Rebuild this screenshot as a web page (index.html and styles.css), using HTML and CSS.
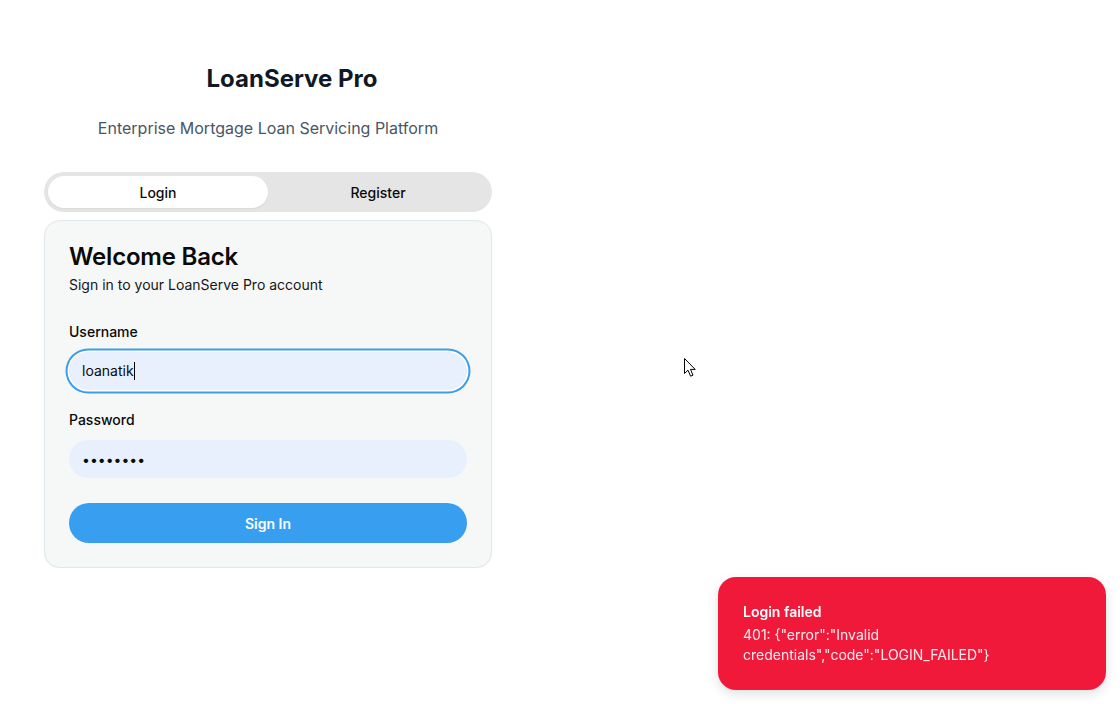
FILE: index.html
```html
<!DOCTYPE html>
<html lang="en">
<head>
<meta charset="utf-8">
<title>LoanServe Pro</title>
<link rel="stylesheet" href="styles.css">
</head>
<body>
<main class="page">
  <header class="brand">
    <div class="brand-row">
      <span class="logo-slot"></span>
      <h1 class="brand-title">LoanServe Pro</h1>
    </div>
    <p class="brand-sub">Enterprise Mortgage Loan Servicing Platform</p>
  </header>

  <div class="tabs">
    <button class="tab tab-active" type="button">Login</button>
    <button class="tab" type="button">Register</button>
  </div>

  <section class="card">
    <h2 class="card-title">Welcome Back</h2>
    <p class="card-desc">Sign in to your LoanServe Pro account</p>

    <form class="form">
      <label class="label label-first" for="username">Username</label>
      <div class="input input-focus"><span class="input-text">loanatik</span><span class="caret"></span></div>
      <label class="label" for="password">Password</label>
      <input id="password" class="input input-pass" type="password" value="password">
      <button class="submit" type="button">Sign In</button>
    </form>
  </section>
</main>

<div class="toast">
  <div class="toast-title">Login failed</div>
  <div class="toast-body">401: {"error":"Invalid credentials","code":"LOGIN_FAILED"}</div>
</div>

<svg class="pointer" width="14" height="22" viewBox="0 0 14 22" aria-hidden="true">
  <path d="M1.5 1.5 L1.5 16.5 L5 13.2 L7.6 19.2 L10 18.2 L7.5 12.4 L12.2 12.4 Z" fill="#fff" stroke="#000" stroke-width="1" stroke-linejoin="miter"/>
</svg>
</body>
</html>
```

FILE: styles.css
```css
* { box-sizing: border-box; }

html, body {
  margin: 0;
  padding: 0;
  background: #ffffff;
  font-family: Inter, "Noto Sans", "Liberation Sans", sans-serif;
  color: #0a0a0a;
}

.page {
  width: 448px;
  margin-left: 44px;
  padding-top: 63px;
}

.brand {
  display: flex;
  flex-direction: column;
  align-items: center;
}

.brand-row {
  display: flex;
  align-items: center;
  gap: 8px;
}

.logo-slot {
  width: 40px;
  height: 32px;
}

.brand-title {
  margin: 0;
  font-size: 24px;
  line-height: 32px;
  font-weight: 700;
  color: #101828;
}

.brand-sub {
  margin: 21px 0 0;
  font-size: 16px;
  line-height: 24px;
  color: #4a5565;
}

.tabs {
  margin-top: 32px;
  height: 40px;
  padding: 4px;
  background: #e5e5e5;
  border-radius: 999px;
  display: grid;
  grid-template-columns: 1fr 1fr;
}

.tab {
  border: 0;
  background: transparent;
  font-family: inherit;
  font-size: 14px;
  font-weight: 500;
  color: #0a0a0a;
  border-radius: 999px;
  height: 32px;
  padding: 0;
}

.tab-active {
  background: #ffffff;
  box-shadow: 0 1px 2px rgba(0, 0, 0, 0.06);
}

.card {
  margin-top: 8px;
  background: #f6f8f8;
  border: 1px solid #e1e7ea;
  border-radius: 16px;
  padding: 24px;
  box-shadow: 0 1px 2px rgba(0, 0, 0, 0.04);
}

.card-title {
  margin: 0;
  font-size: 24px;
  line-height: 24px;
  font-weight: 600;
  letter-spacing: -0.2px;
  color: #0a0a0a;
}

.card-desc {
  margin: 6px 0 0;
  font-size: 14px;
  line-height: 20px;
  color: #171717;
}

.form {
  display: flex;
  flex-direction: column;
}

.label {
  display: block;
  margin-top: 20px;
  font-size: 14px;
  line-height: 20px;
  font-weight: 500;
  color: #0a0a0a;
}

.label-first {
  margin-top: 27px;
}

.input {
  margin-top: 10px;
  height: 38px;
  width: 100%;
  border: 0;
  border-radius: 999px;
  background: #e8f0fe;
  padding: 0 13px;
  font-family: inherit;
  font-size: 14px;
  color: #0a0a0a;
  outline: none;
  display: flex;
  align-items: center;
}

.input-focus {
  box-shadow: 0 0 0 1.5px #ffffff, 0 0 0 3.5px #3b9cec;
}

.input-text {
  line-height: 20px;
}

.caret {
  width: 1px;
  height: 18px;
  background: #000;
}

.input-pass {
  display: block;
}

.submit {
  margin-top: 25px;
  height: 40px;
  border: 0;
  border-radius: 999px;
  background: #389ef0;
  color: #ffffff;
  font-family: inherit;
  font-size: 14px;
  font-weight: 600;
}

.toast {
  position: fixed;
  right: 14px;
  bottom: 14px;
  width: 388px;
  padding: 25px;
  background: #f0193a;
  border-radius: 18px;
  color: #ffffff;
  box-shadow: 0 4px 12px rgba(0, 0, 0, 0.12);
}

.toast-title {
  font-size: 14px;
  line-height: 20px;
  font-weight: 600;
}

.toast-body {
  margin-top: 3px;
  font-size: 14px;
  line-height: 20px;
  color: rgba(255, 255, 255, 0.92);
}

.pointer {
  position: absolute;
  left: 683px;
  top: 357px;
}
```
